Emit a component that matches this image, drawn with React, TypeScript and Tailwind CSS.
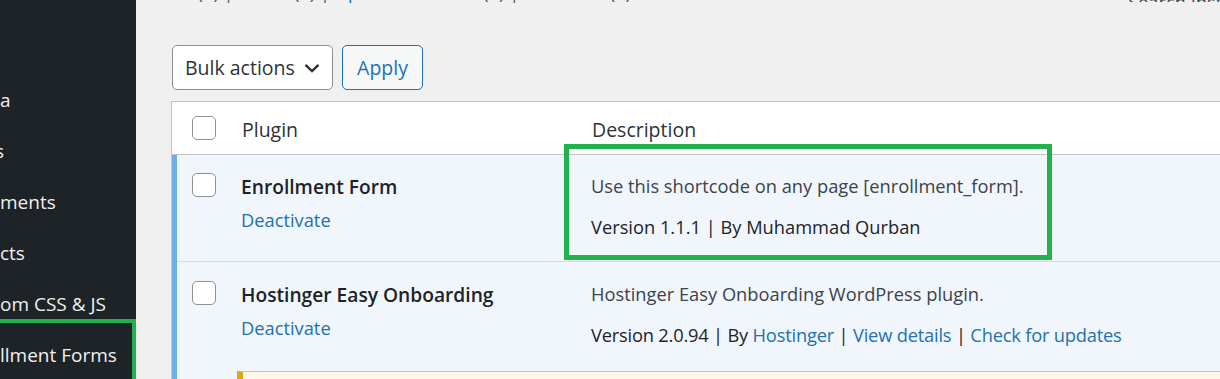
import React from "react";

function Checkbox() {
  return <div className="w-[24px] h-[24px] rounded-[5px] border border-[#8c8f94] bg-white" />;
}

export default function App() {
  const side = ["a", "s", "ments", "cts", "om CSS & JS", "llment Forms"];
  return (
    <div className="w-[1220px] h-[379px] overflow-hidden flex font-['Open_Sans',sans-serif]">
      {/* Sidebar */}
      <div className="w-[136px] shrink-0 bg-[#1d2327] relative pt-[75px] overflow-hidden">
        {side.map((t, i) => (
          <div
            key={i}
            className={`h-[51px] flex items-center whitespace-nowrap text-[19px] text-[#f0f0f1] ${i === 1 ? "-ml-[5px]" : ""}`}
          >
            {t}
          </div>
        ))}
        <div className="absolute left-[-6px] top-[319px] w-[142px] h-[64px] border-[4px] border-[#22b14c]" />
      </div>

      {/* Main */}
      <div className="flex-1 bg-[#f0f0f1] relative overflow-hidden pl-[35px]">
        {/* subsubsub + search */}
        <div className="flex h-[20px] -mt-[18px] text-[18.3px] leading-[20px] whitespace-nowrap">
          <div className="pl-[1px] text-[#50575e]">
            <span className="text-[#2271b1]">All</span> (4) |{" "}
            <span className="text-[#2271b1]">Active</span> (4) |{" "}
            <span className="text-[#2271b1]">Update Available</span> (1) |{" "}
            <span className="text-[#2271b1]">Must-Use</span> (1)
          </div>
          <div className="ml-auto w-[92px] overflow-hidden mt-[10px] text-[#3c434a]">Search Installed Plugins...</div>
        </div>

        {/* tablenav */}
        <div className="flex gap-[9px] mt-[43px] pl-[1px]">
          <div className="w-[161px] h-[45px] rounded-[5px] border border-[#8c8f94] bg-white flex items-center pl-[12px] pr-[12px] pt-[1px] text-[19.5px] text-[#2c3338]">
            <span>Bulk actions</span>
            <svg className="ml-auto" width="16" height="10" viewBox="0 0 16 10">
              <path d="M1.5 1.8 L8 8 L14.5 1.8" stroke="#2c3338" strokeWidth="2.4" fill="none" />
            </svg>
          </div>
          <div className="w-[81px] h-[45px] rounded-[5px] border border-[#2271b1] bg-[#f6f7f7] flex items-center justify-center pt-[1px] text-[19.5px] text-[#2271b1]">
            Apply
          </div>
        </div>

        {/* table */}
        <div className="mt-[11px] w-[1100px] border border-[#c3c4c7] bg-white">
          <div className="flex h-[53px] items-center pt-[3px] border-b border-[#c3c4c7] text-[19.5px] text-[#2c3338]">
            <div className="w-[69px] pl-[20px] -mt-[3px]"><Checkbox /></div>
            <div className="w-[350px] pl-[1px]">Plugin</div>
            <div className="pl-[1px]">Description</div>
          </div>

          {/* row 1 */}
          <div className="flex h-[107px] bg-[#f0f6fc] shadow-[inset_5px_0_0_#72aee6,inset_0_-1px_0_#dcdcde]">
            <div className="w-[69px] pl-[20px] pt-[18px]"><Checkbox /></div>
            <div className="w-[350px] pt-[18px]">
              <div className="text-[19.2px] leading-[28px] font-semibold text-[#1d2327]">Enrollment Form</div>
              <div className="text-[18.3px] leading-[26px] mt-[6px] text-[#2271b1]">Deactivate</div>
            </div>
            <div className="flex-1 pt-[18px] text-[18.3px] leading-[26px]">
              <div className="text-[#3c434a]">Use this shortcode on any page [enrollment_form].</div>
              <div className="mt-[15px] text-[#1d2327]">Version 1.1.1 | By Muhammad Qurban</div>
            </div>
          </div>

          {/* row 2 */}
          <div className="flex h-[109px] bg-[#f0f6fc] shadow-[inset_5px_0_0_#72aee6]">
            <div className="w-[69px] pl-[20px] pt-[19px]"><Checkbox /></div>
            <div className="w-[350px] pt-[19px]">
              <div className="text-[19.2px] leading-[28px] font-semibold text-[#1d2327]">Hostinger Easy Onboarding</div>
              <div className="text-[18.3px] leading-[26px] mt-[6px] text-[#2271b1]">Deactivate</div>
            </div>
            <div className="flex-1 pt-[19px] text-[18.3px] leading-[26px]">
              <div className="text-[#3c434a]">Hostinger Easy Onboarding WordPress plugin.</div>
              <div className="mt-[15px] text-[#1d2327] tracking-[-0.2px]">
                Version 2.0.94 | By <span className="text-[#2271b1]">Hostinger</span> |{" "}
                <span className="text-[#2271b1]">View details</span> |{" "}
                <span className="text-[#2271b1]">Check for updates</span>
              </div>
            </div>
          </div>

          {/* update notice row */}
          <div className="flex bg-[#f0f6fc] shadow-[inset_5px_0_0_#72aee6]">
            <div className="w-[65px]" />
            <div className="flex-1 h-[40px] bg-[#fcf9e8] border-t border-[#c3c4c7] border-l-[6px] border-l-[#dba617]" />
          </div>
        </div>

        {/* annotation box */}
        <div className="absolute left-[428px] top-[144px] w-[488px] h-[116px] border-[5px] border-[#22b14c]" />
      </div>
    </div>
  );
}
